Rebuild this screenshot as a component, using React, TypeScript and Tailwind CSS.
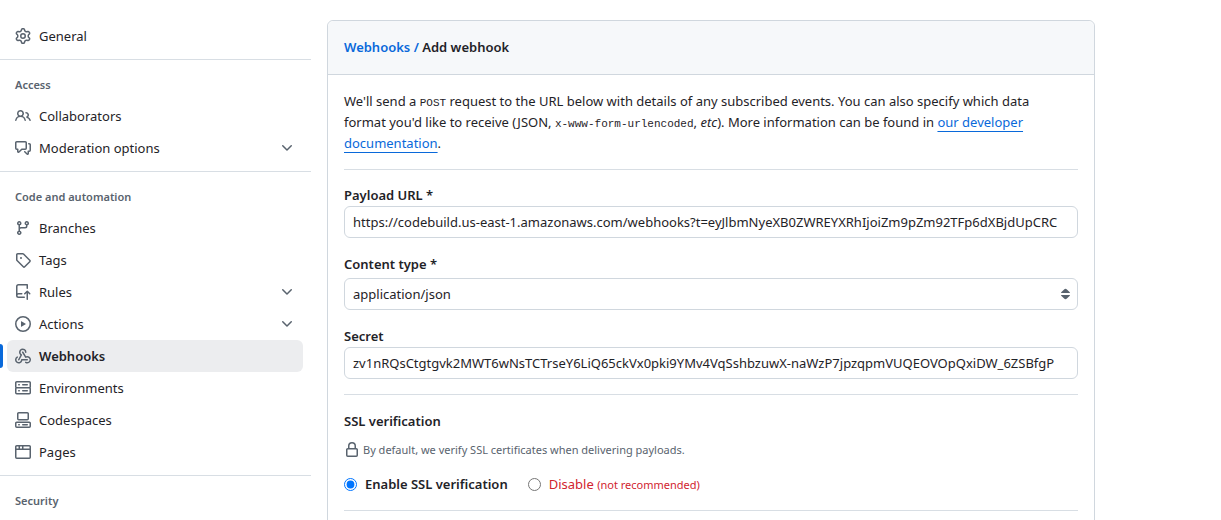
import type { ReactNode } from 'react';

const ICONS = {
  gear: 'M8 0a8.2 8.2 0 0 1 .701.031C9.444.095 9.99.645 10.16 1.29l.288 1.107c.018.066.079.158.212.224.231.114.454.243.668.386.123.082.233.09.299.071l1.103-.303c.644-.176 1.392.021 1.82.63.27.385.506.792.704 1.218.315.675.111 1.422-.364 1.891l-.814.806c-.049.048-.098.147-.088.294.016.257.016.515 0 .772-.01.147.038.246.088.294l.814.806c.475.469.679 1.216.364 1.891a7.977 7.977 0 0 1-.704 1.217c-.428.61-1.176.807-1.82.63l-1.102-.302c-.067-.019-.177-.011-.3.071a5.909 5.909 0 0 1-.668.386c-.133.066-.194.158-.211.224l-.29 1.106c-.168.646-.715 1.196-1.458 1.26a8.006 8.006 0 0 1-1.402 0c-.743-.064-1.289-.614-1.458-1.26l-.289-1.106c-.018-.066-.079-.158-.212-.224a5.738 5.738 0 0 1-.668-.386c-.123-.082-.233-.09-.299-.071l-1.103.303c-.644.176-1.392-.021-1.82-.63a8.12 8.12 0 0 1-.704-1.218c-.315-.675-.111-1.422.363-1.891l.815-.806c.05-.048.098-.147.088-.294a6.214 6.214 0 0 1 0-.772c.01-.147-.038-.246-.088-.294l-.815-.806C.635 6.045.431 5.298.746 4.623a7.92 7.92 0 0 1 .704-1.217c.428-.61 1.176-.807 1.82-.63l1.102.302c.067.019.177.011.3-.071.214-.143.437-.272.668-.386.133-.066.194-.158.211-.224l.29-1.106C6.009.645 6.556.095 7.299.03 7.53.01 7.764 0 8 0Zm-.571 1.525c-.036.003-.108.036-.137.146l-.289 1.105c-.147.561-.549.967-.998 1.189-.173.086-.34.183-.5.29-.417.278-.97.423-1.529.27l-1.103-.303c-.109-.03-.175.016-.195.045-.22.312-.412.644-.573.99-.014.031-.021.11.059.19l.815.806c.411.406.562.957.53 1.456a4.709 4.709 0 0 0 0 .582c.032.499-.119 1.05-.53 1.456l-.815.806c-.081.08-.073.159-.059.19.162.346.353.677.573.989.02.03.085.076.195.046l1.102-.303c.56-.153 1.113-.008 1.53.27.161.107.328.204.501.29.447.222.85.629.997 1.189l.289 1.105c.029.109.101.143.137.146a6.6 6.6 0 0 0 1.142 0c.036-.003.108-.036.137-.146l.289-1.105c.147-.561.549-.967.998-1.189.173-.086.34-.183.5-.29.417-.278.97-.423 1.529-.27l1.103.303c.109.029.175-.016.195-.045.22-.313.411-.644.573-.99.014-.031.021-.11-.059-.19l-.815-.806c-.411-.406-.562-.957-.53-1.456a4.709 4.709 0 0 0 0-.582c-.032-.499.119-1.05.53-1.456l.815-.806c.081-.08.073-.159.059-.19a6.464 6.464 0 0 0-.573-.989c-.02-.03-.085-.076-.195-.046l-1.102.303c-.56.153-1.113.008-1.53-.27a4.44 4.44 0 0 0-.501-.29c-.447-.222-.85-.629-.997-1.189l-.289-1.105c-.029-.11-.101-.143-.137-.146a6.6 6.6 0 0 0-1.142 0ZM11 8a3 3 0 1 1-6 0 3 3 0 0 1 6 0ZM9.5 8a1.5 1.5 0 1 0-3.001.001A1.5 1.5 0 0 0 9.5 8Z',
  people: 'M2 5.5a3.5 3.5 0 1 1 5.898 2.549 5.508 5.508 0 0 1 3.034 4.084.75.75 0 1 1-1.482.235 4 4 0 0 0-7.9 0 .75.75 0 0 1-1.482-.236A5.507 5.507 0 0 1 3.102 8.05 3.493 3.493 0 0 1 2 5.5ZM11 4a3.001 3.001 0 0 1 2.22 5.018 5.01 5.01 0 0 1 2.56 3.012.749.749 0 0 1-.885.954.752.752 0 0 1-.549-.514 3.507 3.507 0 0 0-2.522-2.372.75.75 0 0 1-.574-.73v-.352a.75.75 0 0 1 .416-.672A1.5 1.5 0 0 0 11 5.5.75.75 0 0 1 11 4Zm-5.5-.5a2 2 0 1 0-.001 3.999A2 2 0 0 0 5.5 3.5Z',
  discussion: 'M1.75 1h8.5c.966 0 1.75.784 1.75 1.75v5.5A1.75 1.75 0 0 1 10.25 10H7.061l-2.574 2.573A1.458 1.458 0 0 1 2 11.543V10h-.25A1.75 1.75 0 0 1 0 8.25v-5.5C0 1.784.784 1 1.75 1ZM1.5 2.75v5.5c0 .138.112.25.25.25h1a.75.75 0 0 1 .75.75v2.19l2.72-2.72a.749.749 0 0 1 .53-.22h3.5a.25.25 0 0 0 .25-.25v-5.5a.25.25 0 0 0-.25-.25h-8.5a.25.25 0 0 0-.25.25Zm13 2a.25.25 0 0 0-.25-.25h-.5a.75.75 0 0 1 0-1.5h.5c.966 0 1.75.784 1.75 1.75v5.5A1.75 1.75 0 0 1 14.25 12H14v1.543a1.458 1.458 0 0 1-2.487 1.03L9.22 12.28a.749.749 0 0 1 .326-1.275.749.749 0 0 1 .734.215l2.22 2.22v-2.19a.75.75 0 0 1 .75-.75h1a.25.25 0 0 0 .25-.25Z',
  branch: 'M9.5 3.25a2.25 2.25 0 1 1 3 2.122V6A2.5 2.5 0 0 1 10 8.5H6a1 1 0 0 0-1 1v1.128a2.251 2.251 0 1 1-1.5 0V5.372a2.25 2.25 0 1 1 1.5 0v1.836A2.493 2.493 0 0 1 6 7h4a1 1 0 0 0 1-1v-.628A2.25 2.25 0 0 1 9.5 3.25Zm-6 0a.75.75 0 1 0 1.5 0 .75.75 0 0 0-1.5 0Zm8.25-.75a.75.75 0 1 0 0 1.5.75.75 0 0 0 0-1.5ZM4.25 12a.75.75 0 1 0 0 1.5.75.75 0 0 0 0-1.5Z',
  tag: 'M1 7.775V2.75C1 1.784 1.784 1 2.75 1h5.025c.464 0 .91.184 1.238.513l6.25 6.25a1.75 1.75 0 0 1 0 2.474l-5.026 5.026a1.75 1.75 0 0 1-2.474 0l-6.25-6.25A1.752 1.752 0 0 1 1 7.775Zm1.5 0c0 .066.026.13.073.177l6.25 6.25a.25.25 0 0 0 .354 0l5.025-5.025a.25.25 0 0 0 0-.354l-6.25-6.25a.25.25 0 0 0-.177-.073H2.75a.25.25 0 0 0-.25.25ZM6 5a1 1 0 1 1 0 2 1 1 0 0 1 0-2Z',
  repoPush: 'M1 2.5A2.5 2.5 0 0 1 3.5 0h8.75a.75.75 0 0 1 .75.75v3.5a.75.75 0 0 1-1.5 0V1.5h-8a1 1 0 0 0-1 1v6.708A2.493 2.493 0 0 1 3.5 9h3.25a.75.75 0 0 1 0 1.5H3.5a1 1 0 0 0 0 2h5.75a.75.75 0 0 1 0 1.5H3.5A2.5 2.5 0 0 1 1 11.5Zm13.23 7.79h-.001l-1.224-1.224v6.184a.75.75 0 0 1-1.5 0V9.066L10.28 10.29a.75.75 0 0 1-1.06-1.061l2.505-2.504a.75.75 0 0 1 1.06 0L15.29 9.23a.751.751 0 0 1-.018 1.042.751.751 0 0 1-1.042.018Z',
  play: 'M8 0a8 8 0 1 1 0 16A8 8 0 0 1 8 0ZM1.5 8a6.5 6.5 0 1 0 13 0 6.5 6.5 0 0 0-13 0Zm4.879-2.773 4.264 2.559a.25.25 0 0 1 0 .428l-4.264 2.559A.25.25 0 0 1 6 10.559V5.442a.25.25 0 0 1 .379-.215Z',
  webhook: 'M5.5 4.25a2.25 2.25 0 0 1 4.5 0 .75.75 0 0 0 1.5 0 3.75 3.75 0 1 0-6.14 2.889l-2.272 4.258a.75.75 0 0 0 1.324.706L7 7.25a.75.75 0 0 0-.309-1.015A2.25 2.25 0 0 1 5.5 4.25ZM7.364 3.607a.75.75 0 0 1 1.03.257l2.608 4.349a3.75 3.75 0 1 1-.628 6.785.75.75 0 0 1 .752-1.299 2.25 2.25 0 1 0-.033-3.88.75.75 0 0 1-1.03-.256L7.107 4.636a.75.75 0 0 1 .257-1.03ZM2.9 8.776A.75.75 0 0 1 2.625 9.8 2.25 2.25 0 1 0 6 11.75a.75.75 0 0 1 .75-.751h5.5a.75.75 0 0 1 0 1.5H7.425a3.751 3.751 0 1 1-5.55-3.998.75.75 0 0 1 1.024.274Z',
  server: 'M1.75 1h12.5c.966 0 1.75.784 1.75 1.75v4c0 .372-.116.717-.314 1 .198.283.314.628.314 1v4a1.75 1.75 0 0 1-1.75 1.75H1.75A1.75 1.75 0 0 1 0 12.75v-4c0-.358.109-.707.314-1a1.739 1.739 0 0 1-.314-1v-4C0 1.784.784 1 1.75 1ZM1.5 2.75v4c0 .138.112.25.25.25h12.5a.25.25 0 0 0 .25-.25v-4a.25.25 0 0 0-.25-.25H1.75a.25.25 0 0 0-.25.25Zm.25 5.75a.25.25 0 0 0-.25.25v4c0 .138.112.25.25.25h12.5a.25.25 0 0 0 .25-.25v-4a.25.25 0 0 0-.25-.25ZM7 4.75A.75.75 0 0 1 7.75 4h4.5a.75.75 0 0 1 0 1.5h-4.5A.75.75 0 0 1 7 4.75ZM7.75 10h4.5a.75.75 0 0 1 0 1.5h-4.5a.75.75 0 0 1 0-1.5ZM3 4.75A.75.75 0 0 1 3.75 4h.5a.75.75 0 0 1 0 1.5h-.5A.75.75 0 0 1 3 4.75ZM3.75 10h.5a.75.75 0 0 1 0 1.5h-.5a.75.75 0 0 1 0-1.5Z',
  codespaces: 'M0 11.25c0-.966.784-1.75 1.75-1.75h12.5c.966 0 1.75.784 1.75 1.75v3A1.75 1.75 0 0 1 14.25 16H1.75A1.75 1.75 0 0 1 0 14.25Zm2-9.5C2 .784 2.784 0 3.75 0h8.5C13.216 0 14 .784 14 1.75v5a1.75 1.75 0 0 1-1.75 1.75h-8.5A1.75 1.75 0 0 1 2 6.75Zm1.75-.25a.25.25 0 0 0-.25.25v5c0 .138.112.25.25.25h8.5a.25.25 0 0 0 .25-.25v-5a.25.25 0 0 0-.25-.25Zm-2 9.5a.25.25 0 0 0-.25.25v3c0 .138.112.25.25.25h12.5a.25.25 0 0 0 .25-.25v-3a.25.25 0 0 0-.25-.25ZM7 12.75a.75.75 0 0 1 .75-.75h4.5a.75.75 0 0 1 0 1.5h-4.5a.75.75 0 0 1-.75-.75Zm-4 0a.75.75 0 0 1 .75-.75h.5a.75.75 0 0 1 0 1.5h-.5a.75.75 0 0 1-.75-.75Z',
  browser: 'M0 2.75C0 1.784.784 1 1.75 1h12.5c.966 0 1.75.784 1.75 1.75v10.5A1.75 1.75 0 0 1 14.25 15H1.75A1.75 1.75 0 0 1 0 13.25ZM14.5 6h-13v7.25c0 .138.112.25.25.25h12.5a.25.25 0 0 0 .25-.25Zm-6-3.5v2h6V2.75a.25.25 0 0 0-.25-.25ZM5 2.5v2h2v-2Zm-3.25 0a.25.25 0 0 0-.25.25V4.5h2v-2Z',
  lock: 'M4 4a4 4 0 0 1 8 0v2h.25c.966 0 1.75.784 1.75 1.75v5.5A1.75 1.75 0 0 1 12.25 15h-8.5A1.75 1.75 0 0 1 2 13.25v-5.5C2 6.784 2.784 6 3.75 6H4Zm8.25 3.5h-8.5a.25.25 0 0 0-.25.25v5.5c0 .138.112.25.25.25h8.5a.25.25 0 0 0 .25-.25v-5.5a.25.25 0 0 0-.25-.25ZM10.5 6V4a2.5 2.5 0 1 0-5 0v2Z',
  chevronDown: 'M12.78 5.22a.749.749 0 0 1 0 1.06l-4.25 4.25a.749.749 0 0 1-1.06 0L3.22 6.28a.749.749 0 1 1 1.06-1.06L8 8.939l3.72-3.719a.749.749 0 0 1 1.06 0Z',
  selectArrows: 'M3.5 9h8c.4 0 .6.5.3.8l-2.9 2.7a2 2 0 0 1-2.8 0L3.2 9.8c-.3-.3-.1-.8.3-.8ZM3.5 7h8c.4 0 .6-.5.3-.8L8.9 3.5a2 2 0 0 0-2.8 0L3.2 6.2c-.3.3-.1.8.3.8Z',
};

type IconName = keyof typeof ICONS;

interface NavItem {
  label: string;
  icon: IconName;
  expandable?: boolean;
  active?: boolean;
}

interface NavSection {
  title?: string;
  items: NavItem[];
}

const sections: NavSection[] = [
  { items: [{ label: 'General', icon: 'gear' }] },
  {
    title: 'Access',
    items: [
      { label: 'Collaborators', icon: 'people' },
      { label: 'Moderation options', icon: 'discussion', expandable: true },
    ],
  },
  {
    title: 'Code and automation',
    items: [
      { label: 'Branches', icon: 'branch' },
      { label: 'Tags', icon: 'tag' },
      { label: 'Rules', icon: 'repoPush', expandable: true },
      { label: 'Actions', icon: 'play', expandable: true },
      { label: 'Webhooks', icon: 'webhook', active: true },
      { label: 'Environments', icon: 'server' },
      { label: 'Codespaces', icon: 'codespaces' },
      { label: 'Pages', icon: 'browser' },
    ],
  },
  { title: 'Security', items: [] },
];

const fieldClass =
  'block w-full h-8 rounded-md border border-[#d0d7de] bg-white px-2 text-[13px] text-[#1f2328]';

function Icon({ name, className = '' }: { name: IconName; className?: string }) {
  return (
    <svg className={`w-4 h-4 shrink-0 ${className}`} viewBox="0 0 16 16" fill="currentColor" aria-hidden="true">
      <path d={ICONS[name]} />
    </svg>
  );
}

function NavRow({ item }: { item: NavItem }) {
  const rowClass = `flex flex-1 items-center gap-2 h-8 px-2 rounded-md text-left ${
    item.active ? 'bg-[#ecedef] font-semibold' : 'hover:bg-gray-100'
  }`;
  const content = (
    <>
      <Icon name={item.icon} className="text-[#59636e]" />
      <span className="flex-1">{item.label}</span>
      {item.expandable && <Icon name="chevronDown" className="text-[#59636e]" />}
    </>
  );

  return (
    <li className="flex items-center gap-1 pr-2">
      <span className={`w-[3px] h-6 rounded-r-md ${item.active ? 'bg-[#0969da]' : ''}`} />
      {item.expandable ? (
        <button type="button" className={rowClass}>{content}</button>
      ) : (
        <a href="#" className={rowClass}>{content}</a>
      )}
    </li>
  );
}

function Sidebar() {
  return (
    <nav className="w-[311px] shrink-0">
      {sections.map((section, index) => (
        <div key={index} className={index > 0 ? 'mt-[7px] pt-2 border-t border-[#d8dee4]' : ''}>
          {section.title && (
            <h3 className="flex items-center h-8 pl-[15px] text-[11px] font-semibold text-[#59636e]">
              {section.title}
            </h3>
          )}
          <ul>
            {section.items.map(item => (
              <NavRow key={item.label} item={item} />
            ))}
          </ul>
        </div>
      ))}
    </nav>
  );
}

function Label({ htmlFor, children }: { htmlFor: string; children: ReactNode }) {
  return (
    <label htmlFor={htmlFor} className="block font-semibold">
      {children}
    </label>
  );
}

function Code({ children }: { children: ReactNode }) {
  return <code className="font-['Liberation_Mono',monospace] text-[11px] leading-none">{children}</code>;
}

function Divider() {
  return <hr className="my-[15px] border-[#d8dee4]" />;
}

export default function App() {
  return (
    <div className="flex items-start gap-4 pt-5 bg-white font-['Noto_Sans',sans-serif] text-[13px] leading-[21px] text-[#1f2328]">
      <Sidebar />

      <main className="flex-1 min-w-0 max-w-3xl rounded-md border border-[#d0d7de]">
        <h2 className="p-4 rounded-t-md border-b border-[#d0d7de] bg-[#f6f8fa] font-semibold">
          <a href="#" className="text-[#0969da]">Webhooks /</a> Add webhook
        </h2>

        <form className="p-4" onSubmit={e => e.preventDefault()}>
          <p className="pr-4">
            We'll send a <Code>POST</Code> request to the URL below with details of any subscribed events. You can
            also specify which data format you'd like to receive (JSON, <Code>x-www-form-urlencoded</Code>
            , <em>etc</em>). More information can be found in{' '}
            <a href="#" className="text-[#0969da] underline underline-offset-4">our developer documentation</a>.
          </p>

          <Divider />

          <Label htmlFor="payload-url">Payload URL *</Label>
          <input
            id="payload-url"
            type="text"
            className={fieldClass}
            defaultValue="https://codebuild.us-east-1.amazonaws.com/webhooks?t=eyJlbmNyeXB0ZWREYXRhIjoiZm9pZm92TFp6dXBjdUpCRC"
          />

          <div className="mt-4 grid gap-[3px]">
            <Label htmlFor="content-type">Content type *</Label>
            <div className="relative">
              <select id="content-type" className={`${fieldClass} appearance-none`} defaultValue="application/json">
                <option>application/json</option>
                <option>application/x-www-form-urlencoded</option>
              </select>
              <Icon name="selectArrows" className="absolute right-1 top-2 text-[#59636e] pointer-events-none" />
            </div>
          </div>

          <div className="mt-4">
            <Label htmlFor="secret">Secret</Label>
            <input
              id="secret"
              type="text"
              className={fieldClass}
              defaultValue="zv1nRQsCtgtgvk2MWT6wNsTCTrseY6LiQ65ckVx0pki9YMv4VqSshbzuwX-naWzP7jpzqpmVUQEOVOpQxiDW_6ZSBfgP"
            />
          </div>

          <Divider />

          <h4 className="mt-4 font-semibold">SSL verification</h4>
          <p className="mt-[7px] flex items-center gap-[3px] text-[11px] text-[#59636e]">
            <Icon name="lock" />
            By default, we verify SSL certificates when delivering payloads.
          </p>
          <div className="mt-3.5 flex items-center gap-5">
            <label className="flex items-center gap-2 font-semibold">
              <input type="radio" name="ssl" className="w-[13px] h-[13px]" defaultChecked />
              Enable SSL verification
            </label>
            <label className="flex items-center gap-2 text-[#d1242f]">
              <input type="radio" name="ssl" className="w-[13px] h-[13px]" />
              <span>
                Disable <span className="text-[11px]">(not recommended)</span>
              </span>
            </label>
          </div>

          <Divider />
        </form>
      </main>
    </div>
  );
}
